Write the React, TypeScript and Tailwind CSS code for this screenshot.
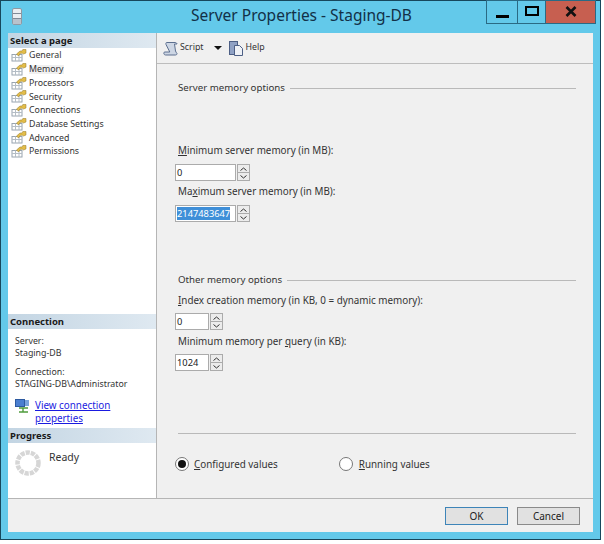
const pages = [
  "General",
  "Memory",
  "Processors",
  "Security",
  "Connections",
  "Database Settings",
  "Advanced",
  "Permissions",
];

const PageIcon = () => (
  <svg width="16" height="13" viewBox="0 0 16 13" className="shrink-0">
    <rect x="1" y="5.500" width="10" height="6.500" fill="#fff" stroke="#98a4af" />
    <path d="M1 8.500h10M4.500 5.500v6.500M8 5.500v6.500" stroke="#b4bdc5" />
    <path d="M5.500 5L9 2h2l.8-1.500L15 .5v3.500l-2.500 1-1-.7H9.500L7.500 7z" fill="#e3bd4a" stroke="#927622" strokeWidth=".5" />
  </svg>
);

const SectionHeader = ({ label }: { label: string }) => (
  <div className="h-[15px] shrink-0 bg-gradient-to-r from-[#c3d5e3] to-[#dfe9f1] pl-[2px] text-[9.5px] leading-[15px] font-bold text-[#1a1a1a]">
    {label}
  </div>
);

const Spinner = () => (
  <svg width="26" height="26" viewBox="0 0 26 26" className="shrink-0">
    <circle cx="13" cy="13" r="10.500" fill="none" stroke="#d6d6d6" strokeWidth="4.500" strokeDasharray="4.200 1" />
  </svg>
);

const Spin = ({ value, width, selected }: { value: string; width: string; selected?: boolean }) => (
  <div className="flex h-[17px] items-stretch">
    <div className={`${width} flex items-center border border-[#ababab] bg-white pl-[1px] text-[9.3px] text-[#222]`}>
      {selected ? <span className="bg-[#3f8fd8] leading-[13px] text-white">{value}</span> : value}
    </div>
    <div className="ml-[1px] flex w-[13px] flex-col border border-[#ababab] bg-[#ececec]">
      <div className="flex flex-1 items-center justify-center border-b border-[#ababab]">
        <svg width="7" height="4" viewBox="0 0 7 4"><path d="M.5 3.500l3-2.500 3 2.500" fill="none" stroke="#333" /></svg>
      </div>
      <div className="flex flex-1 items-center justify-center">
        <svg width="7" height="4" viewBox="0 0 7 4"><path d="M.5.500l3 2.500 3-2.500" fill="none" stroke="#333" /></svg>
      </div>
    </div>
  </div>
);

const GroupTitle = ({ label }: { label: string }) => (
  <div className="flex items-center gap-[5px] pr-[17px] text-[9.7px] leading-[14px]">
    <span className="whitespace-nowrap">{label}</span>
    <div className="h-px flex-1 bg-[#b9b9b9]" />
  </div>
);

export default function App() {
  return (
    <div
      className="h-[544px] w-[604px] bg-white text-[9.85px] text-[#333]"
      style={{ fontFamily: '"Noto Sans", "Open Sans", sans-serif' }}
    >
      <div className="flex h-[540px] w-[601px] flex-col border border-[#17475c] bg-[#63c9ea] px-[7px] pb-[7px]">
        {/* title bar */}
        <div className="relative flex h-[32px] shrink-0 items-center justify-center pb-[2px] pl-[2px]">
          <svg width="10" height="17" viewBox="0 0 10 17" className="absolute top-[7px] left-[4px]">
            <rect x=".5" y=".5" width="9" height="16" rx="1.500" fill="#e9edf1" stroke="#8f98a3" />
            <path d="M1 5.500h8M1 10.500h8" stroke="#7f8a96" />
            <rect x="1" y="11" width="8" height="5" fill="#b9c2cc" />
          </svg>
          <span className="text-[15.5px] text-[#123047]">Server Properties - Staging-DB</span>
          <div className="absolute top-[-1px] right-[-3px] flex h-[24px] border border-[#2a6a84]">
            <div className="flex w-[31px] items-center justify-center border-r border-[#2a6a84]">
              <div className="mt-[8px] h-[3px] w-[13px] bg-black" />
            </div>
            <div className="flex w-[28px] items-center justify-center border-r border-[#2a6a84]">
              <div className="mb-[2px] h-[10px] w-[14px] border-[2.5px] border-black" />
            </div>
            <div className="flex w-[49px] items-center justify-center bg-[#c75f50]">
              <svg width="12" height="11" viewBox="0 0 12 11" className="mb-[2px]">
                <path d="M1.500 1l9 9M10.500 1l-9 9" stroke="#111" strokeWidth="2.600" />
              </svg>
            </div>
          </div>
        </div>

        <div className="flex min-h-0 flex-1 flex-col bg-[#f0f0f0]">
          <div className="flex min-h-0 flex-1">
            {/* left side */}
            <div className="flex w-[149px] shrink-0 flex-col border-r border-[#b5b5b5] bg-white">
              <SectionHeader label="Select a page" />
              <div className="flex-1 pt-[1px] pl-[3px] text-[8.8px]">
                {pages.map((p) => (
                  <div key={p} className="flex h-[13.7px] items-center gap-[2px] leading-none">
                    <PageIcon />
                    <span className={p === "Memory" ? "bg-[#f0f0f0]" : ""}>{p}</span>
                  </div>
                ))}
              </div>
              <SectionHeader label="Connection" />
              <div className="h-[99px] shrink-0 pt-[6px] pl-[7px] text-[8.8px] leading-[12px]">
                <div>Server:</div>
                <div>Staging-DB</div>
                <div className="mt-[7px]">Connection:</div>
                <div className="whitespace-nowrap">STAGING-DB\Administrator</div>
                <div className="mt-[9px] flex">
                  <svg width="16" height="14" viewBox="0 0 16 14" className="shrink-0">
                    <rect x=".5" y=".5" width="9" height="7" fill="#4a7fd0" stroke="#2d5aa0" />
                    <rect x="10" y="1" width="4" height="6" fill="#7aa4dd" />
                    <path d="M4 9h9M8 9v4M4 13h9" stroke="#4f9c3c" strokeWidth="1.400" />
                  </svg>
                  <a className="ml-[4px] text-[9.85px] leading-[13px] text-[#1a1ae0] underline">View connection<br />properties</a>
                </div>
              </div>
              <SectionHeader label="Progress" />
              <div className="flex h-[55px] shrink-0 pt-[7px] pl-[7px]">
                <Spinner />
                <span className="ml-[8px] text-[10.5px] leading-[14px]">Ready</span>
              </div>
            </div>

            {/* right side */}
            <div className="flex min-w-0 flex-1 flex-col">
              <div className="flex h-[31px] shrink-0 items-center border-b border-[#bdbdbd] pl-[6px] text-[8.8px]">
                <svg width="15" height="15" viewBox="0 0 15 15">
                  <path d="M3.500 1.500h8.500c1 0 2 .7 2 1.500h-2.500l1 7c.2 1 1 1.500 1.500 2.500 0 1-.7 1.500-1.500 1.500H2.500C1.500 14 .8 13 .8 12c0-.5.4-1 1-1h5L3 3.500c-.3-1 0-2 .5-2z" fill="#cdd6e4" stroke="#5c6f8f" />
                </svg>
                <span className="ml-[2px]">Script</span>
                <svg width="8" height="4" viewBox="0 0 8 4" className="ml-[10px]"><path d="M0 0h8L4 4z" fill="#111" /></svg>
                <svg width="14" height="15" viewBox="0 0 14 15" className="ml-[7px]">
                  <rect x=".5" y=".5" width="8" height="13" fill="#8fa1c4" stroke="#4d5f85" />
                  <path d="M5.500 4.500h5l3 3v7h-8z" fill="#eef1f6" stroke="#4d5f85" />
                </svg>
                <span className="ml-[3px]">Help</span>
              </div>

              <div className="flex flex-1 flex-col pl-[21px]">
                <div className="mt-[17px]"><GroupTitle label="Server memory options" /></div>
                <div className="mt-[48px] leading-[14px]"><span className="underline">M</span>inimum server memory (in MB):</div>
                <div className="mt-[7px] -ml-[3px]"><Spin value="0" width="w-[61px]" /></div>
                <div className="mt-[3px] leading-[14px]">Ma<span className="underline">x</span>imum server memory (in MB):</div>
                <div className="mt-[7px] -ml-[3px]"><Spin value="2147483647" width="w-[61px]" selected /></div>

                <div className="mt-[51px]"><GroupTitle label="Other memory options" /></div>
                <div className="mt-[6px] leading-[14px]"><span className="underline">I</span>ndex creation memory (in KB, 0 = dynamic memory):</div>
                <div className="mt-[6px] -ml-[3px]"><Spin value="0" width="w-[34px]" /></div>
                <div className="mt-[4px] leading-[14px]">Minimum memory per <span className="underline">q</span>uery (in KB):</div>
                <div className="mt-[6px] -ml-[3px]"><Spin value="1024" width="w-[34px]" /></div>

                <div className="mt-[62px] mr-[17px] h-px bg-[#b9b9b9]" />
                <div className="mt-[23px] -ml-[3px] flex items-center">
                  <div className="flex h-[14px] w-[14px] items-center justify-center rounded-full border border-[#777] bg-white">
                    <div className="h-[8px] w-[8px] rounded-full bg-[#111]" />
                  </div>
                  <span className="ml-[5px]"><span className="underline">C</span>onfigured values</span>
                  <div className="ml-[61px] h-[14px] w-[14px] rounded-full border border-[#777] bg-white" />
                  <span className="ml-[6px]"><span className="underline">R</span>unning values</span>
                </div>
              </div>
            </div>
          </div>

          {/* footer */}
          <div className="flex h-[34px] shrink-0 items-start justify-end gap-[9px] border-t border-[#b5b5b5] pt-[8px] pr-[13px]">
            <button className="h-[18px] w-[63px] border border-[#3d84b8] bg-[#e1e1e1] text-[10px] leading-none text-[#222]">OK</button>
            <button className="h-[18px] w-[63px] border border-[#8a8a8a] bg-[#e1e1e1] text-[10px] leading-none text-[#222]">Cancel</button>
          </div>
        </div>
      </div>
    </div>
  );
}
